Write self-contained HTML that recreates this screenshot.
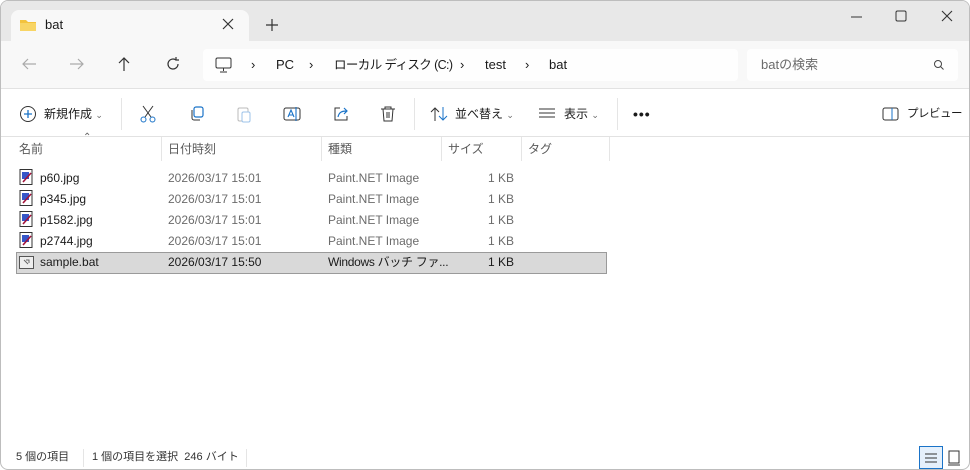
<!DOCTYPE html>
<html><head><meta charset="utf-8"><style>
*{margin:0;padding:0;box-sizing:border-box}
body{width:970px;height:470px;overflow:hidden;font-family:"Liberation Sans","Noto Sans CJK JP",sans-serif;font-size:12px;color:#1a1a1a;background:#fff;position:relative}
.a{position:absolute}
.win{left:0;top:0;width:970px;height:470px;border:1px solid #bdbdbd;border-radius:8px;overflow:hidden;background:#fff}
.tb{left:0;top:0;width:970px;height:40px;background:#e8e8e8}
.tab{left:10px;top:9px;width:238px;height:32px;background:#f8f8f8;border-radius:8px 8px 0 0}
.nav{left:0;top:40px;width:970px;height:48px;background:#f8f8f8;border-bottom:1px solid #e2e2e2}
.box{background:#fefefe;border-radius:4px;height:32px;top:48px}
.t{white-space:nowrap;line-height:14px}
.g{color:#6b6b6b}
.hdr{color:#5a5a5a;font-size:12px}
.sep{width:1px;background:#e5e5e5}
</style></head><body>
<div class="a win">
<div class="a tb"></div>
<div class="a tab"></div>
<svg class="a" style="left:18px;top:17px" width="18" height="14"><path d="M1 2h6l2 2h8v9H1z" fill="#f3c33d"/><path d="M1 5h16v8H1z" fill="#f8d565"/></svg>
<div class="a t" style="left:44px;top:17px;font-size:13px">bat</div>
<svg class="a" style="left:221px;top:17px" width="12" height="12"><path d="M1 1l10 10M11 1L1 11" stroke="#333" stroke-width="1.2"/></svg>
<svg class="a" style="left:265px;top:18px" width="12" height="12"><path d="M6 0v12M0 6h12" stroke="#333" stroke-width="1.2"/></svg>
<svg class="a" style="left:850px;top:10px" width="12" height="12"><path d="M0 6h11" stroke="#333"/></svg>
<svg class="a" style="left:894px;top:9px" width="12" height="12"><rect x="1" y="1" width="10" height="10" rx="1.5" fill="none" stroke="#333"/></svg>
<svg class="a" style="left:940px;top:9px" width="12" height="12"><path d="M1 1l10 10M11 1L1 11" stroke="#333" stroke-width="1.1"/></svg>
<div class="a nav"></div>
<svg class="a" style="left:20px;top:56px" width="16" height="14"><path d="M15 7H2M7 2L2 7l5 5" fill="none" stroke="#aaa" stroke-width="1.2"/></svg>
<svg class="a" style="left:68px;top:56px" width="16" height="14"><path d="M1 7h13M9 2l5 5-5 5" fill="none" stroke="#aaa" stroke-width="1.2"/></svg>
<svg class="a" style="left:116px;top:55px" width="14" height="16"><path d="M7 15V2M2 7l5-5 5 5" fill="none" stroke="#333" stroke-width="1.2"/></svg>
<svg class="a" style="left:165px;top:56px" width="14" height="14"><path d="M12 7a5 5 0 1 1-2-4M10 0v3h3" fill="none" stroke="#333" stroke-width="1.2"/></svg>
<div class="a box" style="left:202px;width:535px"></div>
<div class="a box" style="left:746px;width:211px"></div>
<svg class="a" style="left:214px;top:56px" width="18" height="16"><rect x="1" y="1" width="15" height="10" rx="1.5" fill="none" stroke="#333"/><path d="M8.5 11v3M5 15h7" stroke="#333"/></svg>
<div class="a t" style="left:250px;top:57px;font-size:13px">›</div>
<div class="a t" style="left:275px;top:57px;font-size:13px">PC</div>
<div class="a t" style="left:308px;top:57px;font-size:13px">›</div>
<div class="a t" style="left:333px;top:57px;font-size:12.5px;letter-spacing:-0.6px">ローカル ディスク (C:)</div>
<div class="a t" style="left:459px;top:57px;font-size:13px">›</div>
<div class="a t" style="left:484px;top:57px;font-size:13px">test</div>
<div class="a t" style="left:524px;top:57px;font-size:13px">›</div>
<div class="a t" style="left:548px;top:57px;font-size:13px">bat</div>
<div class="a t g" style="left:760px;top:57px;font-size:13px">batの検索</div>
<svg class="a" style="left:932px;top:58px" width="12" height="12"><circle cx="5" cy="5" r="3.5" fill="none" stroke="#444"/><path d="M7.5 7.5l3 3" stroke="#444"/></svg>
<svg class="a" style="left:18px;top:104px" width="18" height="18"><circle cx="9" cy="9" r="7.5" fill="none" stroke="#333"/><path d="M9 5v8M5 9h8" stroke="#1a73c8" stroke-width="1.3"/></svg>
<div class="a t" style="left:43px;top:106px">新規作成 <span class="g" style="font-size:9px">⌄</span></div>
<div class="a sep" style="left:120px;top:97px;height:32px"></div>
<svg class="a" style="left:138px;top:104px" width="18" height="18"><path d="M4 1l8 11M14 1L6 12" stroke="#333"/><circle cx="4.5" cy="14.5" r="2.5" fill="none" stroke="#1a73c8"/><circle cx="13.5" cy="14.5" r="2.5" fill="none" stroke="#1a73c8"/></svg>
<svg class="a" style="left:187px;top:104px" width="18" height="18"><rect x="6" y="2" width="9" height="10" rx="2" fill="none" stroke="#1a73c8" stroke-width="1.2"/><path d="M4 5v8a2 2 0 0 0 2 2h6" fill="none" stroke="#333"/></svg>
<svg class="a" style="left:235px;top:104px" width="18" height="18"><rect x="2" y="3" width="10" height="13" rx="1.5" fill="none" stroke="#bbb"/><rect x="6" y="7" width="8" height="10" rx="1.5" fill="#fff" stroke="#9cc3ea"/></svg>
<svg class="a" style="left:282px;top:104px" width="18" height="18"><rect x="1" y="3" width="16" height="12" rx="2" fill="none" stroke="#333"/><path d="M5 12l3-7 3 7M6 10h4M13 2v14" fill="none" stroke="#1a73c8" stroke-width="1.1"/></svg>
<svg class="a" style="left:331px;top:104px" width="18" height="18"><path d="M8 3H3v12h12v-4" fill="none" stroke="#333"/><path d="M6 12c1-5 4-6 9-6M12 3l3 3-3 3" fill="none" stroke="#1a73c8" stroke-width="1.2"/></svg>
<svg class="a" style="left:378px;top:104px" width="18" height="18"><path d="M2 4h14M6 4V2h6v2M4 4l1 12h8l1-12M8 7v6M10 7v6" fill="none" stroke="#333"/></svg>
<div class="a sep" style="left:413px;top:97px;height:32px"></div>
<svg class="a" style="left:429px;top:105px" width="18" height="16"><path d="M5 15V2M1 6l4-4 4 4" fill="none" stroke="#333"/><path d="M13 1v13M9 10l4 4 4-4" fill="none" stroke="#1a73c8"/></svg>
<div class="a t" style="left:454px;top:106px">並べ替え <span class="g" style="font-size:9px">⌄</span></div>
<svg class="a" style="left:538px;top:107px" width="16" height="12"><path d="M0 1h16M0 5h16M0 9h16" stroke="#333"/></svg>
<div class="a t" style="left:563px;top:106px">表示 <span class="g" style="font-size:9px">⌄</span></div>
<div class="a sep" style="left:616px;top:97px;height:32px"></div>
<div class="a t" style="left:632px;top:106px;font-size:14px;font-weight:bold;letter-spacing:1px">•••</div>
<svg class="a" style="left:881px;top:106px" width="18" height="14"><rect x="1" y="1" width="15" height="12" rx="2" fill="none" stroke="#333"/><path d="M10 1v12" stroke="#1a73c8"/></svg>
<div class="a t" style="left:906px;top:106px;font-size:11.5px;letter-spacing:-0.5px">プレビュー</div>
<div class="a" style="left:0;top:135px;width:970px;height:1px;background:#e2e2e2"></div>
<div class="a t" style="left:82px;top:130px;font-size:10px;color:#666">⌃</div>
<div class="a t hdr" style="left:18px;top:141px">名前</div>
<div class="a t hdr" style="left:167px;top:141px">日付時刻</div>
<div class="a t hdr" style="left:327px;top:141px">種類</div>
<div class="a t hdr" style="left:447px;top:141px">サイズ</div>
<div class="a t hdr" style="left:527px;top:141px">タグ</div>
<div class="a sep" style="left:160px;top:136px;height:24px"></div>
<div class="a sep" style="left:320px;top:136px;height:24px"></div>
<div class="a sep" style="left:440px;top:136px;height:24px"></div>
<div class="a sep" style="left:520px;top:136px;height:24px"></div>
<div class="a sep" style="left:608px;top:136px;height:24px"></div>
<div class="a" style="left:15px;top:251px;width:591px;height:22px;background:#d9d9d9;border:1px solid #9a9a9a"></div>
<svg class="a" style="left:18px;top:168px" width="16" height="84">
<g id="ic"><rect x="1" y="0.5" width="12" height="15" fill="#fff" stroke="#333"/><path d="M3 3h7v7H3z" fill="#3656c8"/><path d="M4 13l8-9" stroke="#a3123a" stroke-width="1.6"/></g>
<use href="#ic" y="21"/><use href="#ic" y="42"/><use href="#ic" y="63"/></svg>
<svg class="a" style="left:18px;top:254px" width="16" height="16"><rect x="0.5" y="1.5" width="14" height="12" fill="#eee" stroke="#555"/><path d="M5 5l4 4M7 5h3v3" stroke="#666" fill="none"/></svg>
<div class="a t" style="left:39px;top:167px;line-height:21px">p60.jpg<br>p345.jpg<br>p1582.jpg<br>p2744.jpg<br>sample.bat</div>
<div class="a t g" style="left:167px;top:167px;line-height:21px">2026/03/17 15:01<br>2026/03/17 15:01<br>2026/03/17 15:01<br>2026/03/17 15:01<br><span style="color:#1a1a1a">2026/03/17 15:50</span></div>
<div class="a t g" style="left:327px;top:167px;line-height:21px">Paint.NET Image<br>Paint.NET Image<br>Paint.NET Image<br>Paint.NET Image<br><span style="color:#1a1a1a;letter-spacing:-0.3px">Windows バッチ ファ...</span></div>
<div class="a t g" style="left:470px;top:167px;width:43px;text-align:right;line-height:21px">1 KB<br>1 KB<br>1 KB<br>1 KB<br><span style="color:#1a1a1a">1 KB</span></div>
<div class="a t" style="left:15px;top:449px;font-size:11px;color:#333">5 個の項目</div>
<div class="a sep" style="left:82px;top:448px;height:18px"></div>
<div class="a t" style="left:91px;top:449px;font-size:11px;color:#333">1 個の項目を選択&nbsp;&nbsp;246 バイト</div>
<div class="a sep" style="left:245px;top:448px;height:18px"></div>
<div class="a" style="left:918px;top:445px;width:24px;height:23px;background:#e5f0fb;border:1px solid #1a73c8"></div>
<svg class="a" style="left:924px;top:451px" width="12" height="12"><path d="M0 2h12M0 6h12M0 10h12" stroke="#333"/></svg>
<svg class="a" style="left:947px;top:449px" width="12" height="16"><rect x="1" y="1" width="10" height="12" fill="none" stroke="#333"/><path d="M0 15h12" stroke="#333"/></svg>
</div>
</body></html>
